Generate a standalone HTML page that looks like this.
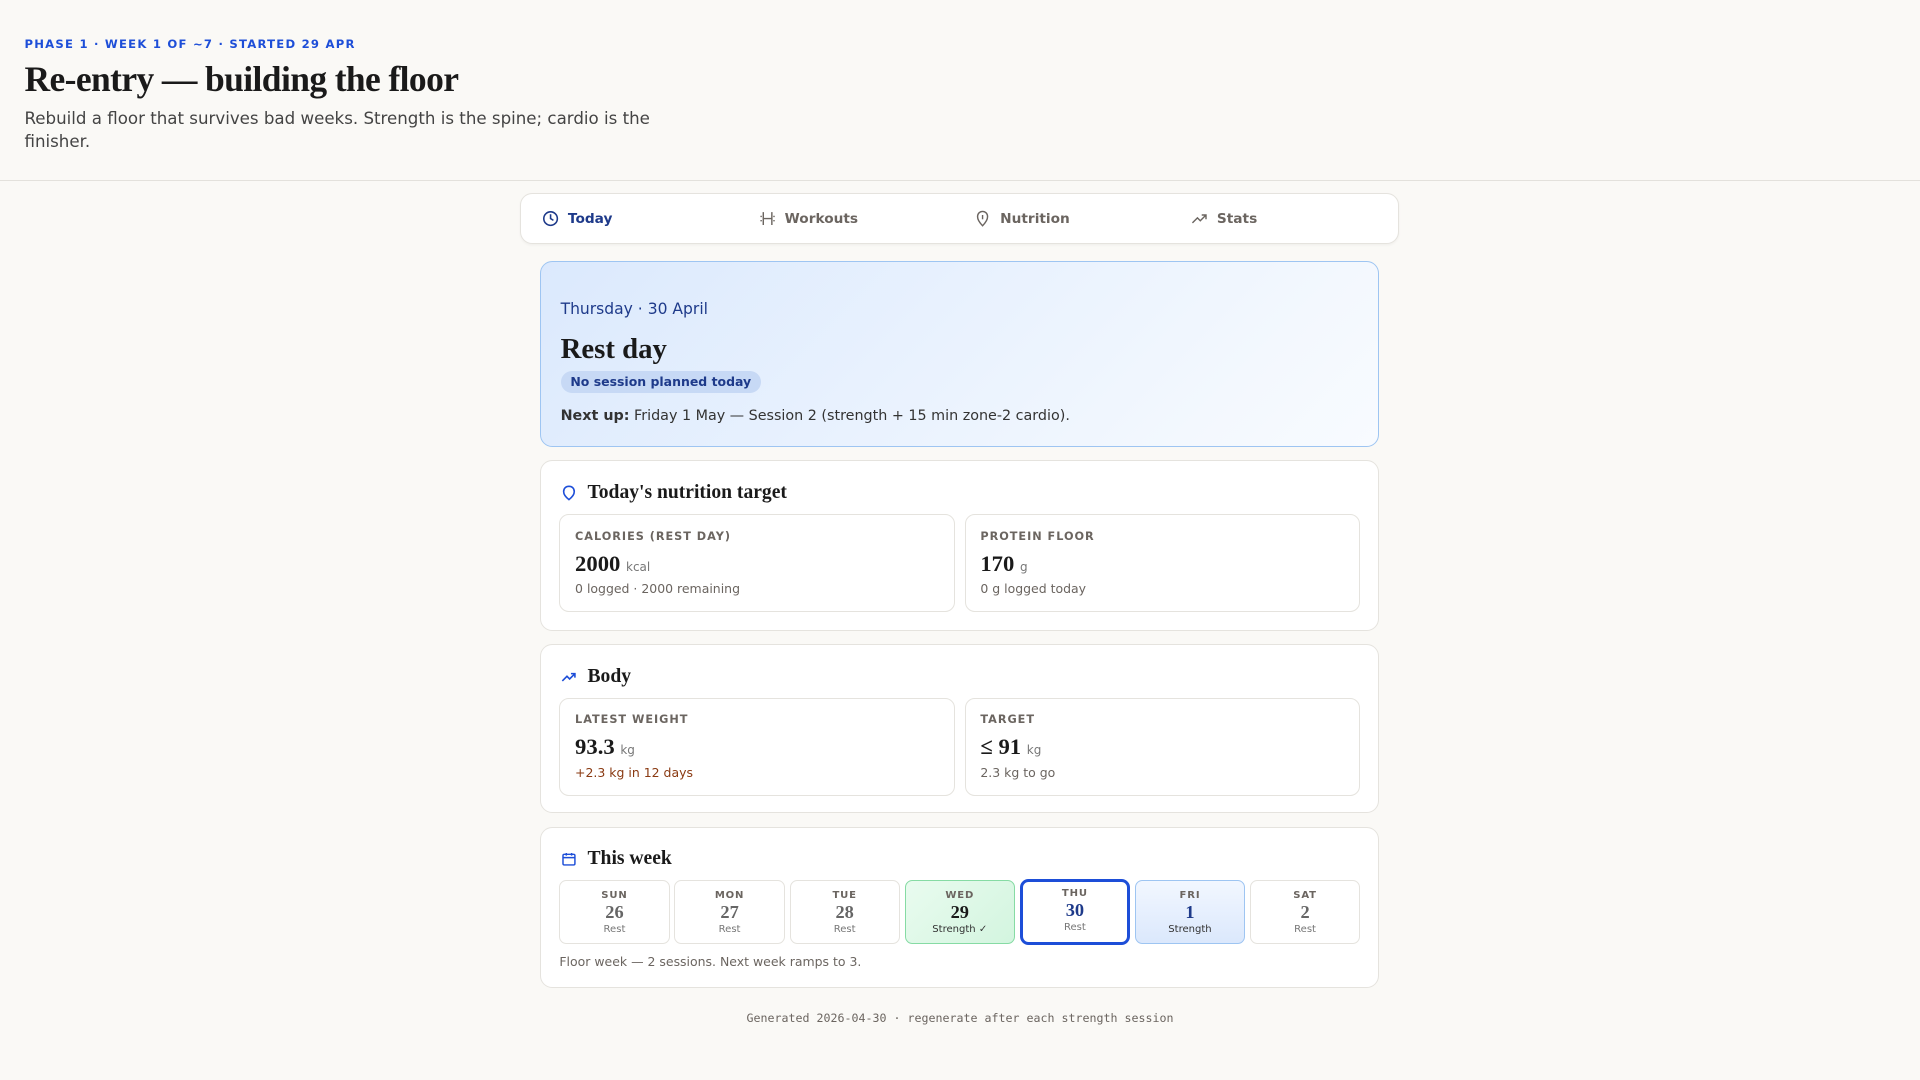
<!DOCTYPE html>
<html><head><meta charset="utf-8"><style>
html,body{margin:0;padding:0;background:#faf9f6;}
body{width:1568px;height:882px;zoom:1.22449;font-family:"DejaVu Sans","Liberation Sans",sans-serif;color:#222;overflow:hidden;position:relative}
.hdr{position:absolute;left:0;top:0;width:1568px;height:147px;border-bottom:1px solid #e3e1dc}
.phase{position:absolute;left:20px;top:30px;font-size:9.5px;font-weight:bold;letter-spacing:1px;color:#1d4ed8}
h1{position:absolute;left:20px;top:47px;margin:0;font-family:"Liberation Serif",serif;font-size:29px;font-weight:bold;letter-spacing:-0.5px;color:#1a1a1a}
.sub{position:absolute;left:20px;top:87px;width:520px;font-size:13.6px;line-height:19px;color:#444}
.nav{position:absolute;left:425px;top:158px;width:716px;height:40px;background:#fff;border:1px solid #e5e3de;border-radius:10px;box-shadow:0 1px 2px rgba(0,0,0,.04)}
.nav div{position:absolute;top:13px;font-size:11.2px;font-weight:bold;color:#6b6560;display:flex;align-items:center;gap:7px}
.nav svg{width:14px;height:14px}
.card{position:absolute;left:441px;width:685px;background:#fff;border:1px solid #e5e3de;border-radius:10px;box-sizing:border-box}
.hero{top:213px;height:152px;background:linear-gradient(135deg,#dbe9fd,#f3f8fe 80%,#f8fbff);border-color:#9ec5f2}
.date{position:absolute;left:16px;top:31px;font-size:12.7px;color:#1e3a8a}
.rest{position:absolute;left:16px;top:58px;font-family:"Liberation Serif",serif;font-size:23.5px;font-weight:bold;color:#1a1a1a}
.pill{position:absolute;left:16px;top:89px;background:#c7d9f5;color:#1e3a8a;font-size:10.2px;font-weight:bold;padding:3px 8px;border-radius:10px}
.next{position:absolute;left:16px;top:119px;font-size:11.7px;color:#333}
.ct{position:absolute;left:16px;top:17px;font-family:"Liberation Serif",serif;font-size:16px;font-weight:bold;color:#1a1a1a;display:flex;align-items:center;gap:9px}
.ct svg{width:13px;height:13px}
.box{position:absolute;top:43px;width:323px;height:80px;border:1px solid #e5e3de;border-radius:8px;box-sizing:border-box}
.lab{position:absolute;left:12px;top:12px;font-size:9.2px;font-weight:bold;letter-spacing:.8px;color:#6b6560}
.val{position:absolute;left:12px;top:29px;font-family:"Liberation Serif",serif;font-size:18.5px;font-weight:bold;color:#1a1a1a}
.val span{font-family:"DejaVu Sans",sans-serif;font-size:9.8px;font-weight:normal;color:#777}
.note{position:absolute;left:12px;top:54px;font-size:10.2px;color:#6b6560}
.day{position:absolute;top:43px;width:90px;height:52px;border:1px solid #e5e3de;border-radius:6px;box-sizing:border-box;text-align:center}
.day .d{font-size:8.2px;font-weight:bold;letter-spacing:.7px;color:#6b6560;margin-top:7px}
.day .n{font-family:"Liberation Serif",serif;font-size:15px;font-weight:bold;color:#666;line-height:16px;margin-top:2px}
.day .s{font-size:8.2px;color:#777;margin-top:1px}
.foot{position:absolute;left:0;width:1568px;top:826px;text-align:center;font-family:"DejaVu Sans Mono","Liberation Mono",monospace;font-size:9.5px;color:#6b6560}
</style></head><body>
<div class="hdr">
<div class="phase">PHASE 1 · WEEK 1 OF ~7 · STARTED 29 APR</div>
<h1>Re-entry — building the floor</h1>
<div class="sub">Rebuild a floor that survives bad weeks. Strength is the spine; cardio is the finisher.</div>
</div>
<div class="nav">
<div style="left:17px;color:#1e3a8a"><svg viewBox="0 0 24 24" fill="none" stroke="#1e3a8a" stroke-width="2.2"><circle cx="12" cy="12" r="9.5"/><path d="M12 6v6l4 2.5"/></svg>Today</div>
<div style="left:194px"><svg viewBox="0 0 24 24" fill="none" stroke="#6b6560" stroke-width="2"><path d="M6 3v18M18 3v18M6 12h12M3 8v2M3 14v2M21 8v2M21 14v2"/></svg>Workouts</div>
<div style="left:370px"><svg viewBox="0 0 24 24" fill="none" stroke="#6b6560" stroke-width="2"><path d="M12 2c4 0 7 3 7 7.5 0 5-4 9.5-7 12.5-3-3-7-7.5-7-12.5C5 5 8 2 12 2z"/><path d="M12 7v6"/></svg>Nutrition</div>
<div style="left:547px"><svg viewBox="0 0 24 24" fill="none" stroke="#6b6560" stroke-width="2"><path d="M2 18l7-7 4 4 8-8M15 7h6v6"/></svg>Stats</div>
</div>
<div class="card hero">
<div class="date">Thursday · 30 April</div>
<div class="rest">Rest day</div>
<div class="pill">No session planned today</div>
<div class="next"><b>Next up:</b> Friday 1 May — Session 2 (strength + 15 min zone-2 cardio).</div>
</div>
<div class="card" style="top:376px;height:139px">
<div class="ct"><svg viewBox="0 0 24 24" fill="none" stroke="#1d4ed8" stroke-width="2.4"><path d="M12 2c4.5 0 8 3 8 8 0 5-4 9-8 12-4-3-8-7-8-12 0-5 3.5-8 8-8z"/></svg>Today's nutrition target</div>
<div class="box" style="left:15px"><div class="lab">CALORIES (REST DAY)</div><div class="val">2000 <span>kcal</span></div><div class="note">0 logged · 2000 remaining</div></div>
<div class="box" style="left:346px"><div class="lab">PROTEIN FLOOR</div><div class="val">170 <span>g</span></div><div class="note">0 g logged today</div></div>
</div>
<div class="card" style="top:526px;height:138px">
<div class="ct"><svg viewBox="0 0 24 24" fill="none" stroke="#1d4ed8" stroke-width="2.4"><path d="M2 18l7-7 4 4 8-8M15 7h6v6"/></svg>Body</div>
<div class="box" style="left:15px"><div class="lab">LATEST WEIGHT</div><div class="val">93.3 <span>kg</span></div><div class="note" style="color:#8a3a12">+2.3 kg in 12 days</div></div>
<div class="box" style="left:346px"><div class="lab">TARGET</div><div class="val">≤ 91 <span>kg</span></div><div class="note">2.3 kg to go</div></div>
</div>
<div class="card" style="top:675px;height:132px">
<div class="ct"><svg viewBox="0 0 24 24" fill="none" stroke="#1d4ed8" stroke-width="2.2"><rect x="3" y="5" width="18" height="16" rx="2"/><path d="M3 10h18M8 3v4M16 3v4"/></svg>This week</div>
<div class="day" style="left:15px"><div class="d">SUN</div><div class="n">26</div><div class="s">Rest</div></div>
<div class="day" style="left:109px"><div class="d">MON</div><div class="n">27</div><div class="s">Rest</div></div>
<div class="day" style="left:203px"><div class="d">TUE</div><div class="n">28</div><div class="s">Rest</div></div>
<div class="day" style="left:297px;background:linear-gradient(135deg,#e9fbef,#d3f5df);border-color:#86dba4"><div class="d">WED</div><div class="n" style="color:#1a1a1a">29</div><div class="s" style="color:#333">Strength ✓</div></div>
<div class="day" style="left:391px;top:42px;height:54px;border:3px solid #1d4ed8;border-radius:7px"><div class="d" style="margin-top:5px">THU</div><div class="n" style="color:#1e3a8a">30</div><div class="s">Rest</div></div>
<div class="day" style="left:485px;background:linear-gradient(180deg,#f2f7ff,#dbe8fc);border-color:#9ec5f2"><div class="d">FRI</div><div class="n" style="color:#1e3a8a">1</div><div class="s" style="color:#333">Strength</div></div>
<div class="day" style="left:579px"><div class="d">SAT</div><div class="n">2</div><div class="s">Rest</div></div>
<div style="position:absolute;left:15px;top:103px;font-size:10.2px;color:#6b6560">Floor week — 2 sessions. Next week ramps to 3.</div>
</div>
<div class="foot">Generated 2026-04-30 · regenerate after each strength session</div>
</body></html>
